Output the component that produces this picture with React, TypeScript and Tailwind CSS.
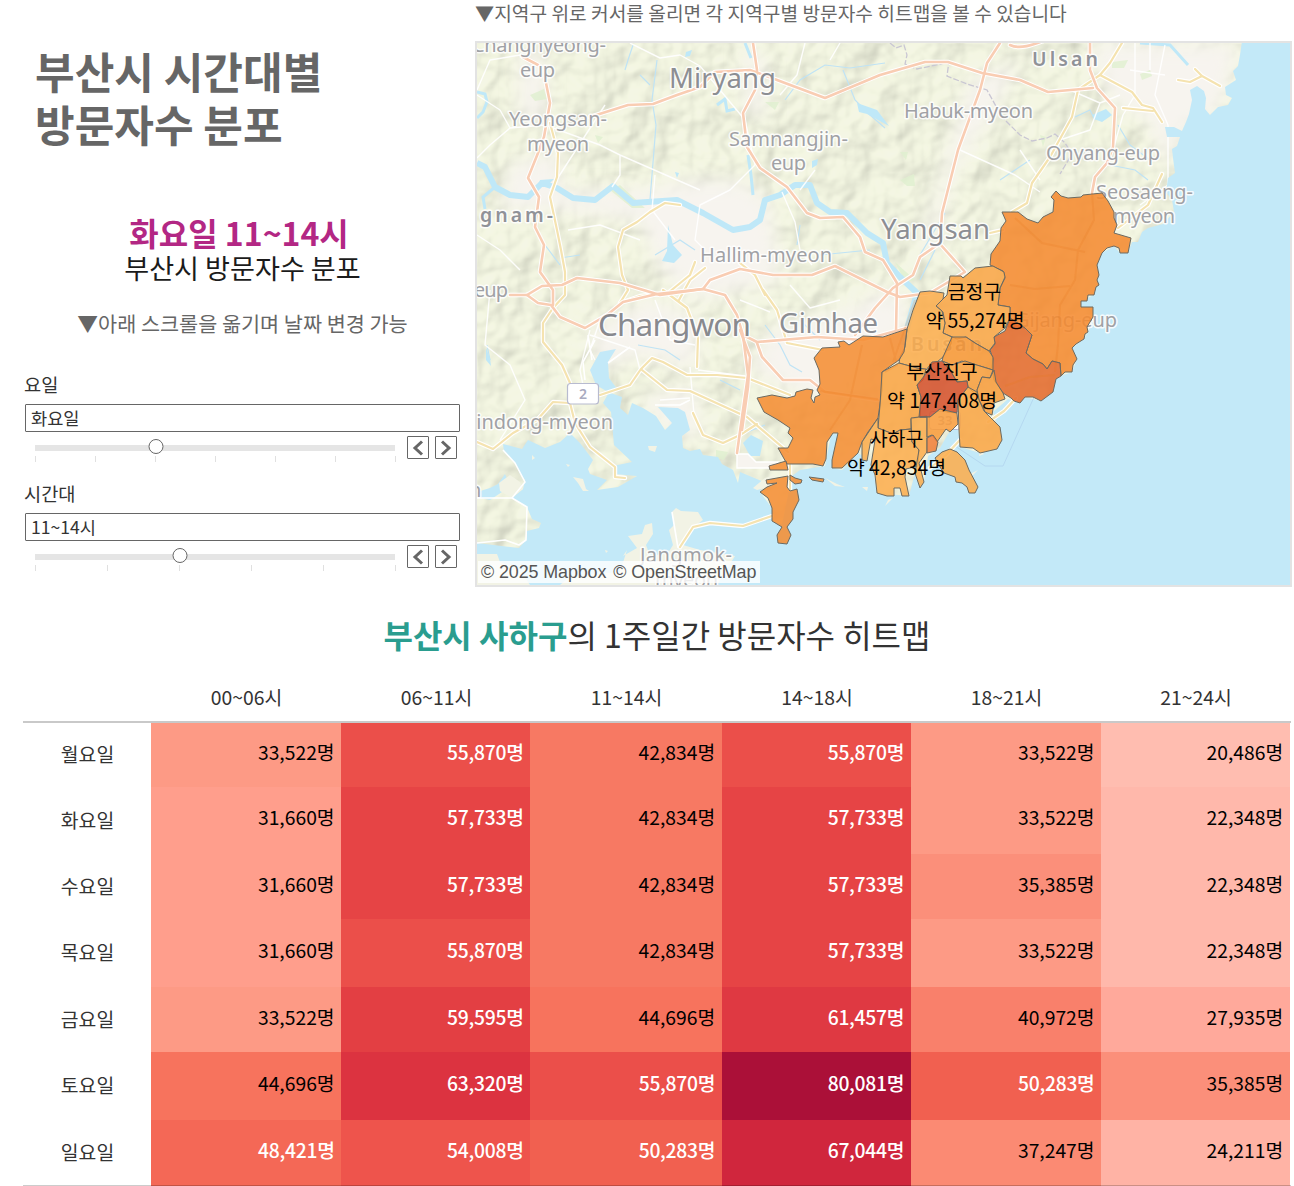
import React from "react";

const KR = "font-['Noto_Sans_CJK_KR',sans-serif]";

const hours = ["00~06시", "06~11시", "11~14시", "14~18시", "18~21시", "21~24시"];

const week: { day: string; values: number[] }[] = [
  { day: "월요일", values: [33522, 55870, 42834, 55870, 33522, 20486] },
  { day: "화요일", values: [31660, 57733, 42834, 57733, 33522, 22348] },
  { day: "수요일", values: [31660, 57733, 42834, 57733, 35385, 22348] },
  { day: "목요일", values: [31660, 55870, 42834, 57733, 33522, 22348] },
  { day: "금요일", values: [33522, 59595, 44696, 61457, 40972, 27935] },
  { day: "토요일", values: [44696, 63320, 55870, 80081, 50283, 35385] },
  { day: "일요일", values: [48421, 54008, 50283, 67044, 37247, 24211] },
];

const shade: Record<number, string> = {
  20486: "bg-[#ffbdb0] text-black",
  22348: "bg-[#ffb8ab] text-black",
  24211: "bg-[#ffb3a5] text-black",
  27935: "bg-[#ffa99b] text-black",
  31660: "bg-[#ff9e8c] text-black",
  33522: "bg-[#fd9a85] text-black",
  35385: "bg-[#fb8f7a] text-black",
  37247: "bg-[#fb8a73] text-black",
  40972: "bg-[#f9806b] text-black",
  42834: "bg-[#f77963] text-black",
  44696: "bg-[#f7735d] text-black",
  48421: "bg-[#f46856] text-white font-medium tracking-[-0.28px]",
  50283: "bg-[#f16050] text-white font-medium tracking-[-0.28px]",
  54008: "bg-[#ee544c] text-white font-medium tracking-[-0.28px]",
  55870: "bg-[#eb4f4a] text-white font-medium tracking-[-0.28px]",
  57733: "bg-[#e64445] text-white font-medium tracking-[-0.28px]",
  59595: "bg-[#e33f43] text-white font-medium tracking-[-0.28px]",
  61457: "bg-[#df3942] text-white font-medium tracking-[-0.28px]",
  63320: "bg-[#dc3340] text-white font-medium tracking-[-0.28px]",
  67044: "bg-[#d0263d] text-white font-medium tracking-[-0.28px]",
  80081: "bg-[#ab1038] text-white font-medium tracking-[-0.28px]",
};

const eastSea =
  "1242,41 1240,55 1238,66 1233,71 1236,80 1225,87 1226,95 1232,98 1228,105 1218,107 1210,115 1205,109 1206,98 1204,91 1197,86 1190,90 1192,100 1189,114 1186,122 1182,131 1174,127 1165,127 1167,137 1180,137 1177,146 1172,149 1173,158 1175,173 1168,178 1166,192 1172,200 1174,212 1163,224 1148,228 1142,232 1138,242 1132,242 1128,253 1120,253 1114,246 1102,253 1097,265 1099,275 1096,287 1094,295 1081,301 1081,307 1093,307 1093,317 1088,332 1084,339 1072,348 1077,359 1072,372 1061,376 1056,379 1053,392 1041,401 1025,397 1020,403 1008,399 993,412 1002,440 997,449 980,453 960,447 958,425 948,434 940,448 928,456 924,482 915,473 909,496 877,493 872,462 858,453 842,470 832,468 838,433 831,435 825,466 800,470 792,476 782,524 772,522 772,508 760,492 764,482 740,472 738,483 733,470 722,464 718,457 703,455 700,449 690,451 683,448 682,436 690,430 685,412 678,408 658,407 672,423 665,430 656,416 643,408 632,403 628,415 620,408 622,397 608,392 596,385 590,370 600,352 616,349 608,362 609,378 618,390 608,394 603,403 611,412 614,445 632,462 613,466 614,474 637,476 618,487 597,490 607,480 590,474 588,469 593,460 580,443 570,433 560,442 545,448 528,440 522,449 503,444 504,452 515,463 520,474 525,480 523,489 512,498 527,507 532,519 541,523 539,528 527,531 526,540 519,548 477,543 477,585 1290,585 1290,41";

const orangeRoads = [
  "M523 57L538 65M546 83L550 103L544 137L538 153L528 178L539 197L535 227L544 245L540 272L553 290V305",
  "M590 117L628 105L653 104L677 95L700 87L715 72L750 70L777 80L825 98L880 75L925 62H948L982 73L1020 80L1048 92L1093 88",
  "M510 295H527L542 286L562 285L577 278L620 283L660 295L703 289L710 280L740 269L773 275H812L835 266L887 292L900 297L930 293L965 272L940 244",
  "M1000 43L987 63L980 90L958 150L942 213L940 243L920 257L913 275L893 288L875 308L855 335",
  "M753 43L757 70L755 90L743 113L747 147L760 168L787 187L807 213L820 218L843 217L860 237L865 252L883 260L897 283L896 332",
  "M1090 43V70L1097 88L1115 108L1113 147L1107 163L1095 177L1092 193",
  "M527 295L538 303L551 305L560 317L585 328L607 315L623 302L657 294L703 289L725 295L737 315L743 335L748 375L743 410L737 453",
  "M743 335L757 342L817 337L863 340L907 328",
  "M757 343L762 357L783 380H810L825 392L878 400",
  "M740 330L750 357L748 387L742 430",
  "M1010 45C1020 50 1035 44 1043 41",
];

const yellowRoads = [
  "M550 123L558 153L557 177L550 197L557 230L561 250L565 272V295L553 308L543 323V342L562 365L570 383",
  "M680 205L665 203L650 212L637 222L623 230L618 247L622 275L628 290L620 303",
  "M477 442L493 449L513 433L537 420L553 402L570 403L575 423L590 447L615 467V477L625 478",
  "M600 395L630 385L641 369L652 358L663 362L687 375L717 375L747 378L790 395",
  "M642 370L667 390L690 391L747 417L788 452",
  "M693 413L703 435L723 443L740 435L757 424",
  "M663 290L687 308L698 337L697 367",
  "M680 547L693 527L710 523L743 526L772 516",
  "M1122 43L1110 63L1100 75L1078 90L1072 117L1050 157L1032 183L1027 203L1012 212",
  "M1100 75L1132 92L1142 105L1153 108L1162 122M1123 108L1153 111M1178 80L1190 82L1202 76L1220 86M1195 69L1202 76",
  "M763 290L777 310L787 343L823 350M679 300L690 280L705 268",
  "M740 263L755 275L765 295M990 233L1003 230M1162 174L1148 205L1118 228",
  "M1016 398L1004 411L988 422M960 440L946 455L930 468M790 465V490",
  "M620 303L640 296L668 293L690 275L695 262",
];

const whiteRoads =
  "M477 90L490 60L520 55L540 65M477 95L500 110L510 128L545 125M510 128L490 145L477 158M545 125L600 145L620 155L700 190M620 155V175L612 187M630 43L660 58L680 55L700 66L745 120L755 165L730 190L700 205L695 240L705 250M805 43L797 75L780 95M568 230L600 225L640 240M477 235L500 250L520 270M490 290L485 345L510 365L525 400L500 440M590 330L580 370L583 385M590 335L635 350L640 370M600 320L590 350L595 360M655 300L670 340L695 345M690 367L694 415M660 400L690 398M1135 43V95L1123 115L1113 150M1165 45L1155 95L1168 125V185L1140 205M1130 70L1165 75M1150 43V70M1020 150L1040 180M782 192L795 222L800 250L812 265M790 285L810 308L840 300M740 300L770 312M698 370L745 376M840 43L830 60M550 190L605 105M655 175L652 210L675 240M815 170L800 190M1070 90L1100 103L1120 95M1100 103L1090 130L1060 140M960 150L1015 175L1040 192";

const streams =
  "M633 45L628 60L625 70M657 60L652 100L656 125L650 200M785 100L800 80L825 65L850 68L885 63M843 70L855 100L870 115L885 128M545 245L560 265M800 225L797 245M580 255L560 258M655 255L680 240L695 250M1000 180L1030 160M920 255L945 213M1075 117L1090 110L1095 120M1118 125L1130 145L1150 160M1148 180L1135 170L1110 165M487 345L490 360M638 345L665 350L680 360M720 380L740 390M765 325L780 345L790 365L802 372M800 320L820 340M640 75L650 85M820 255L870 250M935 250L920 280M740 435L765 425";

type District = { name: string; fill: string; points: string };

const districts: District[] = [
  {
    name: "기장군",
    fill: "#f58a2f",
    points:
      "1002,212 1006,221 1001,228 1000,241 991,254 990,265 1003,271 1005,278 1000,288 998,305 1010,307 1010,318 1008,327 1025,328 1032,335 1026,353 1033,359 1043,364 1047,369 1052,361 1060,363 1061,376 1065,372 1072,372 1073,365 1077,359 1072,348 1076,344 1084,339 1085,334 1088,332 1087,327 1093,317 1093,307 1081,307 1081,301 1087,301 1088,295 1094,295 1096,287 1099,285 1097,280 1099,275 1097,265 1102,253 1107,248 1114,246 1119,248 1120,253 1128,253 1131,238 1114,233 1117,225 1114,218 1114,212 1108,201 1102,193 1083,195 1081,197 1068,198 1061,196 1056,191 1051,197 1054,200 1053,212 1043,217 1038,223 1027,219 1018,212",
  },
  {
    name: "해운대구",
    fill: "#e46a2c",
    points:
      "1010,318 1005,331 994,337 995,344 990,350 993,359 992,367 994,380 1003,393 1011,398 1014,401 1020,403 1025,397 1033,397 1041,401 1053,392 1056,379 1061,376 1060,363 1052,361 1047,369 1043,364 1033,359 1026,353 1032,335 1025,328",
  },
  {
    name: "금정구",
    fill: "#f9a546",
    points:
      "950,276 961,276 963,278 975,268 993,266 1004,272 1005,277 1000,288 998,305 1010,307 1010,318 1005,328 994,337 995,343 989,351 975,343 966,337 957,339 943,333 945,323 943,312 936,306 947,295",
  },
  {
    name: "북구",
    fill: "#fbad4e",
    points:
      "920,292 930,291 944,293 943,299 936,306 942,311 945,323 943,333 952,337 951,344 943,357 937,362 930,365 926,370 917,368 899,363 900,357 905,347 907,329 913,310",
  },
  {
    name: "강서구",
    fill: "#f58d32",
    points:
      "907,329 904,352 899,360 882,372 882,390 878,418 868,432 862,442 858,453 842,468 832,468 832,460 838,433 833,433 827,442 826,459 823,466 813,464 787,464 778,448 788,448 793,438 788,433 790,428 778,420 764,412 757,398 772,395 787,398 795,396 796,392 807,389 813,390 811,398 814,403 815,397 820,395 817,390 820,384 819,370 814,358 822,348 840,347 838,342 844,341 849,345 863,336 883,337 898,332",
  },
  { name: "강서구", fill: "#f58d32", points: "769,466 786,461 788,470 770,470" },
  {
    name: "강서구",
    fill: "#f58d32",
    points:
      "766,480 788,476 787,487 790,491 797,489 799,500 793,512 793,519 787,527 791,535 787,544 778,543 777,535 782,527 772,521 772,508 768,498 760,492 767,487 777,483 767,484",
  },
  { name: "강서구", fill: "#f58d32", points: "790,475 795,478 802,480 801,483 795,484 790,480" },
  { name: "강서구", fill: "#f58d32", points: "809,477 824,479 823,482 812,480" },
  {
    name: "사상구",
    fill: "#f9a444",
    points:
      "899,363 917,368 926,369 923,380 917,385 921,397 920,417 911,419 911,429 900,430 893,434 878,428 880,405 882,372",
  },
  {
    name: "사하구",
    fill: "#fbad4e",
    points:
      "878,428 893,434 900,430 911,429 912,442 919,450 918,466 906,469 905,477 909,496 902,496 900,488 894,488 894,496 887,496 877,493 875,475 871,465 875,440 871,439 867,461 862,460 862,442 878,418",
  },
  {
    name: "서구",
    fill: "#fbad4e",
    points: "911,418 927,416 927,452 919,463 924,482 920,488 915,473 919,450 912,442",
  },
  {
    name: "동래구",
    fill: "#f79635",
    points:
      "952,337 966,337 975,343 989,351 993,357 993,370 980,366 967,363 962,361 952,365 942,361 943,357",
  },
  {
    name: "연제구",
    fill: "#f89e3e",
    points:
      "942,361 952,365 965,361 980,366 993,370 990,378 982,377 977,390 979,398 968,387 967,381 957,382 950,370",
  },
  {
    name: "부산진구",
    fill: "#d4502c",
    points:
      "942,361 932,362 925,375 917,385 921,397 919,417 930,417 940,409 947,412 957,413 958,400 968,387 967,381 957,382 950,370",
  },
  {
    name: "동구",
    fill: "#f89c3c",
    points: "920,417 930,417 940,409 957,413 958,424 950,432 946,429 937,442 932,435 927,437 927,417",
  },
  { name: "중구", fill: "#f0803a", points: "927,438 933,435 938,442 936,451 927,453" },
  {
    name: "수영구",
    fill: "#f89d3d",
    points: "982,377 990,378 994,370 996,382 1003,393 1005,399 994,403 992,415 985,412 983,407 979,400 977,390",
  },
  {
    name: "남구",
    fill: "#f9a545",
    points:
      "958,400 968,387 977,392 979,400 984,411 1000,427 1002,440 997,449 980,453 973,448 960,447 959,430",
  },
  {
    name: "영도구",
    fill: "#fbad4e",
    points:
      "935,458 942,452 950,449 957,452 965,460 969,470 978,487 975,493 969,493 967,487 962,483 956,482 955,477 944,473 940,467",
  },
];

type Place = { x: number; y: number; w: number; size: number; text: string; tone?: string; weight?: number; ls?: number };

const places: Place[] = [
  { x: 472, y: 52, w: 134, size: 20, text: "Changnyeong-" },
  { x: 520, y: 77, w: 35, size: 20, text: "eup" },
  { x: 509, y: 126, w: 98, size: 20, text: "Yeongsan-" },
  { x: 527, y: 151, w: 62, size: 20, text: "myeon" },
  { x: 669, y: 88, w: 107, size: 27.5, text: "Miryang", tone: "#8c8e93" },
  { x: 729, y: 146, w: 119, size: 20, text: "Samnangjin-" },
  { x: 771, y: 170, w: 35, size: 20, text: "eup" },
  { x: 904, y: 118, w: 129, size: 20, text: "Habuk-myeon" },
  { x: 1032, y: 66, w: 69, size: 19.5, text: "Ulsan", tone: "#909298", weight: 600, ls: 3 },
  { x: 1046, y: 160, w: 114, size: 20, text: "Onyang-eup" },
  { x: 1096, y: 199, w: 97, size: 20, text: "Seosaeng-" },
  { x: 1113, y: 223, w: 62, size: 20, text: "myeon" },
  { x: 480, y: 222, w: 76, size: 19.5, text: "gnam-", tone: "#909298", weight: 600, ls: 3 },
  { x: 700, y: 262, w: 132, size: 20, text: "Hallim-myeon" },
  { x: 881, y: 239, w: 109, size: 27.5, text: "Yangsan", tone: "#8c8e93" },
  { x: 474, y: 297, w: 34, size: 20, text: "eup" },
  { x: 598, y: 336, w: 153, size: 31.5, text: "Changwon", tone: "#88898e" },
  { x: 779, y: 333, w: 99, size: 27.5, text: "Gimhae", tone: "#8c8e93" },
  { x: 471, y: 429, w: 142, size: 20, text: "Jindong-myeon" },
  { x: 469, y: 497, w: 13, size: 20, text: "n" },
  { x: 640, y: 562, w: 92, size: 20, text: "Jangmok-" },
  { x: 655, y: 587, w: 63, size: 20, text: "myeon" },
  { x: 1015, y: 327, w: 102, size: 20, text: "Gijang-eup" },
  { x: 911, y: 351, w: 75, size: 19.5, text: "Busan", tone: "#8a8c92", weight: 600, ls: 4 },
];

const districtLabels = [
  { x: 974.5, y: 299, text: "금정구" },
  { x: 975, y: 328, text: "약 55,274명" },
  { x: 942, y: 379, text: "부산진구" },
  { x: 942, y: 408, text: "약 147,408명" },
  { x: 896.5, y: 446, text: "사하구" },
  { x: 896.5, y: 475, text: "약 42,834명" },
];

function BusanMap() {
  return (
    <svg viewBox="477 43 813 542" className="block h-[542px] w-[813px]">
      <defs>
        <filter id="relief" x="0" y="0" width="100%" height="100%" colorInterpolationFilters="sRGB">
          <feTurbulence type="fractalNoise" baseFrequency="0.026" numOctaves="3" seed="11" result="n" />
          <feDiffuseLighting in="n" surfaceScale="8" diffuseConstant="1.1" lightingColor="#f2f4dc">
            <feDistantLight azimuth="225" elevation="62" />
          </feDiffuseLighting>
        </filter>
        <filter id="soft" x="-30%" y="-30%" width="160%" height="160%">
          <feGaussianBlur stdDeviation="9" />
        </filter>
      </defs>
      <rect x="477" y="43" width="813" height="542" fill="#f1f4e1" />
      <rect x="477" y="43" width="813" height="542" filter="url(#relief)" opacity="0.25" />
      <g fill="#f7f4ef" filter="url(#soft)">
        <path d="M510 165L560 150L560 190L640 190L690 180L740 180L770 200L780 280L700 300L660 270L640 220L560 210L500 210Z" />
        <path d="M590 330L650 300L700 320L695 370L640 355L600 370Z" />
        <path d="M640 400L695 385L700 440L670 430Z" />
        <path d="M770 330L850 310L880 290L910 300L900 340L820 400L750 370Z" />
        <path d="M1090 43L1240 43L1220 110L1185 130L1165 170L1150 120L1110 100Z" />
        <path d="M520 43L545 60L545 120L520 120Z" />
        <path d="M745 43L765 60L765 120L745 110Z" />
        <path d="M970 80L1020 60L1000 100L950 180L935 250L920 250Z" />
      </g>
      <g fill="#e0f0d0" opacity="0.8">
        <path d="M530 95l14-6 3 10-12 2z M595 135l8 2-5 6z M900 152l8 0-2 8z M900 180l14-6 1 12-8 0z M765 102l14 0-4 8z M1112 62l16-2-4 8-12 0z M1140 74l10-4 2 6-10 4z M1040 135l6 2-3 10z M716 450l12 2-4 8-8-2z" />
        <path d="M610 190L632 208 645 208 620 185Z M895 262L915 280 905 282Z" />
      </g>
      <path d={streams} fill="none" stroke="#bfe3f5" strokeWidth="1.2" />
      <path
        d="M477 163L485 167L495 187L510 195L528 197L542 183L557 188L573 198L595 200L613 186L633 203L677 200L703 213L733 230L750 227L760 220L765 200L780 195L795 185L810 185L817 203L830 212L847 213L867 233L883 243L887 263L900 277L917 293L908 325L903 345"
        fill="none"
        stroke="#bfe8f8"
        strokeWidth="6"
        strokeLinejoin="round"
      />
      <path d="M477 92l8 2 2 8-4 10-6 6M495 187l-12 10 2 12M753 195l-2-20-3-20M745 43l6 15M717 105l8-6 2 12 8-2M1140 43l30 2 18 20" fill="none" stroke="#bfe8f8" strokeWidth="3" />
      <path d="M668 225l5 20 9 10-8 8-12-2 5-10zM857 103l20 7 12 16-22-12-8-2zM686 52l6-2-2 6-5 1zM675 172l4 1-2 5zM812 161l6-2-1 6-5 3zM1092 115l14-6 6 6-10 7-8-3zM743 443l8-8 12 6-3 15-10 0zM486 348l4 10 1 8-5-6zM540 180l14-1-8 8-8 0z" fill="#bfe8f8" />
      <path d={whiteRoads} fill="none" stroke="#ffffff" strokeWidth="1.4" strokeLinejoin="round" opacity="0.9" />
      <polygon points={eastSea} fill="#c3e9f8" />
      <g fill="#f2f3e5">
        <path d="M672 512L676 508 681 511 698 512 703 520 690 530 683 545 700 550 735 556 717 585H560L570 576 620 572 627 550 623 556 637 548 628 536 642 534 645 525 652 523 653 534 646 545 650 556 668 553 673 545 669 530 674 525Z" />
        <path d="M477 554L497 554 500 562 520 570 530 585H477Z" />
        <path d="M573 477l10 2 3 10 3 2-6 0-5-8z M648 446l9 0-2 6-6-2z M893 498l-8 8 3-6z M775 475l-10 3-12 10 4 2 15-4z M825 478l12 6 8 3-10-1z M862 487l6 0-1 4z M980 450l4 4-5 2z M970 474l8-4-8 8z M532 455l3 3-3 2z M566 464l4 1-2 2z M605 550l3 1-2 2z" />
      </g>
      <path d="M477 497L490 500 505 490 515 498 505 474 498 484 490 488 477 492Z" fill="#c3e9f8" />
      <path d="M512 498L500 491 499 483 510 475 520 482 523 489Z" fill="#f2f3e5" />
      <path d="M477 498L512 498L527 507 526 540 519 545 505 540 477 543M503 450L515 463 525 482 512 498M595 340L583 362 585 380M588 335L592 360M608 363L630 347M655 405H680L690 400M672 512L678 548" fill="none" stroke="#ffffff" strokeWidth="1.6" strokeLinejoin="round" />
      <path d="M737 454H748L756 462H778L770 468H737Z" fill="#f7f4ef" stroke="#ffffff" strokeWidth="1.4" />
      <path d="M1035 395L1003 466H985L955 446" fill="none" stroke="#b5d8f0" strokeWidth="1" />
      <path
        d="M890 43l6 5 8-3 3 10-2 9 12 5 24-5 8-3-2 15 20 8 20 6 10 18 8 12 15 15 12 6 15-3 8-4 10 9 7 11-12 20"
        fill="none"
        stroke="#c9c6d3"
        strokeWidth="1.3"
        strokeDasharray="6 2"
      />
      <g fill="none" strokeLinejoin="round" strokeLinecap="round">
        {yellowRoads.map((d) => (
          <path key={d} d={d} stroke="#ffffff" strokeWidth="4.4" />
        ))}
        {yellowRoads.map((d) => (
          <path key={d} d={d} stroke="#f5e3b0" strokeWidth="2.2" />
        ))}
        {orangeRoads.map((d) => (
          <path key={d} d={d} stroke="#ffffff" strokeWidth="4.6" />
        ))}
        {orangeRoads.map((d) => (
          <path key={d} d={d} stroke="#f9cdb3" strokeWidth="2.6" />
        ))}
      </g>
      <g className="font-['Noto_Sans',sans-serif]" stroke="#ffffff" strokeOpacity="0.85" strokeWidth="3" strokeLinejoin="round" paintOrder="stroke">
        {places.map((p, i) => (
          <text
            key={i}
            x={p.x}
            y={p.y}
            fontSize={p.size}
            fontWeight={p.weight ?? 400}
            fill={p.tone ?? "#a0a1a5"}
            textLength={p.w}
            letterSpacing={p.ls ?? 0}
          >
            {p.text}
          </text>
        ))}
      </g>
      <rect x="567.5" y="383.5" width="31" height="20.5" rx="3" fill="#ffffff" stroke="#b8bbd0" strokeWidth="1.2" />
      <text x="583" y="399" textAnchor="middle" fontSize="14" fontWeight="600" fill="#a9abc0" className="font-['Noto_Sans',sans-serif]">
        2
      </text>
      <rect x="929.5" y="411.5" width="31" height="18" rx="3" fill="#ffffff" stroke="#b8bbd0" />
      <text x="945" y="425" textAnchor="middle" fontSize="13" fontWeight="600" fill="#a9abc0" className="font-['Noto_Sans',sans-serif]">
        33
      </text>
      <g stroke="#6b6a62" strokeWidth="1" strokeLinejoin="round">
        {districts.map((d, i) => (
          <polygon key={i} points={d.points} fill={d.fill} fillOpacity="0.87" />
        ))}
      </g>
      <g fill="none" stroke="#e87820" strokeOpacity="0.2" strokeWidth="2">
        <path d="M1092 193L1094 220L1078 250L1075 280L1060 305L1058 345L1055 372M1010 285L1035 289L1070 286M1015 218L1042 243L1085 252" />
        <path d="M820 391L878 399M862 345L850 400L830 430M890 338L897 365L885 372M893 362L915 300" />
        <path d="M1005 386L1030 377L1055 375" />
      </g>
      <g fill="#000000" fontSize="19.4" textAnchor="middle" className="font-['Noto_Sans_CJK_KR',sans-serif]">
        {districtLabels.map((l) => (
          <text key={l.text} x={l.x} y={l.y}>
            {l.text}
          </text>
        ))}
      </g>
    </svg>
  );
}

function StepButton({ back }: { back?: boolean }) {
  return (
    <button className="flex h-[23px] w-[22px] items-center justify-center rounded-[1px] border border-[#666]">
      <svg viewBox="0 0 12 16" className="h-4 w-3" fill="none" stroke="#666" strokeWidth="3">
        <path d={back ? "M10 1.5L3 8l7 6.5" : "M2 1.5L9 8l-7 6.5"} />
      </svg>
    </button>
  );
}

function Stepper({ label, value, stops, index }: { label: string; value: string; stops: number; index: number }) {
  return (
    <section className="h-[109px]">
      <div className="h-[30px] text-[18.67px] leading-[19px] text-[#333]">{label}</div>
      <div className="ml-px flex h-7 w-[435px] items-center rounded-[1px] border border-[#666] px-[5px] text-[17.6px] leading-6 text-[#333]">
        {value}
      </div>
      <div className="mt-1 flex h-[30px] gap-[6px]">
        <div className="relative ml-[11px] mr-[5px] w-[361px]">
          <div className="mt-[9px] h-[6px] w-[360px] bg-[#e5e5e5]" />
          <div className="mt-[5px] flex justify-between">
            {Array.from({ length: stops }, (_, i) => (
              <span key={i} className="h-[6px] w-px bg-[#e0e0e0]" />
            ))}
          </div>
          <span
            className="absolute top-[3px] size-[15px] -translate-x-1/2 rounded-full border border-[#666] bg-white"
            style={{ left: `${(index / (stops - 1)) * 360 + 0.5}px` }}
          />
        </div>
        <StepButton back />
        <StepButton />
      </div>
    </section>
  );
}

export default function App() {
  return (
    <main className={`h-[1186px] w-[1294px] overflow-hidden bg-white ${KR}`}>
      <div className="flex h-[587px]">
        <div className="w-[475px]">
          <h1 className="pl-[35px] pt-[44px] text-[43.1px] font-bold leading-[53px] text-[#666]">
            부산시 시간대별
            <br />
            방문자수 분포
          </h1>
          <div className="mt-[64px] pl-[2px] text-center">
            <p className="pl-px text-[32px] font-bold leading-[36px] text-[#b32784]">화요일 11~14시</p>
            <p className="pl-[8px] pt-px text-[27.1px] leading-[34px] text-[#1b1b1b]">부산시 방문자수 분포</p>
            <p className="mt-[25px] pl-[8px] text-[20.75px] leading-[26px] text-[#666]">▼아래 스크롤을 옮기며 날짜 변경 가능</p>
          </div>
          <div className="ml-6 mt-[38px]">
            <Stepper label="요일" value="화요일" stops={7} index={2} />
            <Stepper label="시간대" value="11~14시" stops={6} index={2} />
          </div>
        </div>
        <div className="w-[817px]">
          <p className="h-[41px] text-[19.2px] leading-[27px] text-[#666]">▼지역구 위로 커서를 올리면 각 지역구별 방문자수 히트맵을 볼 수 있습니다</p>
          <div className="relative h-[546px] w-[817px] border-2 border-[#e3e3e3]">
            <BusanMap />
            <div className="absolute bottom-[2px] left-[1px] flex h-[22px] w-[282px] items-center gap-[7px] bg-white/80 pl-[3px] font-['Liberation_Sans',sans-serif] text-[17.9px] tracking-[-0.1px] whitespace-nowrap text-[#555]">
              <span>© 2025 Mapbox</span>
              <span>© OpenStreetMap</span>
            </div>
          </div>
        </div>
      </div>

      <h2 className="h-[87px] pl-[20px] pt-[23px] text-center text-[32px] leading-[48px] text-[#333]">
        <span className="font-bold text-[#2a9d8f]">부산시 사하구</span>의 1주일간 방문자수 히트맵
      </h2>

      <div className="relative ml-[23px] w-[1268px] after:absolute after:bottom-0 after:left-0 after:h-px after:w-full after:bg-black/20">
        <div className="grid h-[49px] grid-cols-[128px_191px_189px_191px_190px_189px_190px] border-b-2 border-[#c9c9c9] text-center text-[19.33px] leading-[47px] text-[#333]">
          <span />
          {hours.map((h) => (
            <span key={h}>{h}</span>
          ))}
        </div>
        <div className="grid grid-cols-[128px_190.4px_189px_191.6px_189px_190.4px_188.6px] grid-rows-[63.5px_67.5px_65px_68px_65px_68px_66px]">
          {week.map((row) => (
            <React.Fragment key={row.day}>
              <div className="flex items-center justify-center pl-px text-[19.33px] leading-none text-[#333]">{row.day}</div>
              {row.values.map((v, i) => (
                <div key={i} className={`flex items-center justify-end pb-[4.5px] pr-[6.8px] text-[19.3px] leading-none ${shade[v]}`}>
                  {v.toLocaleString("en-US")}명
                </div>
              ))}
            </React.Fragment>
          ))}
        </div>
      </div>
    </main>
  );
}
